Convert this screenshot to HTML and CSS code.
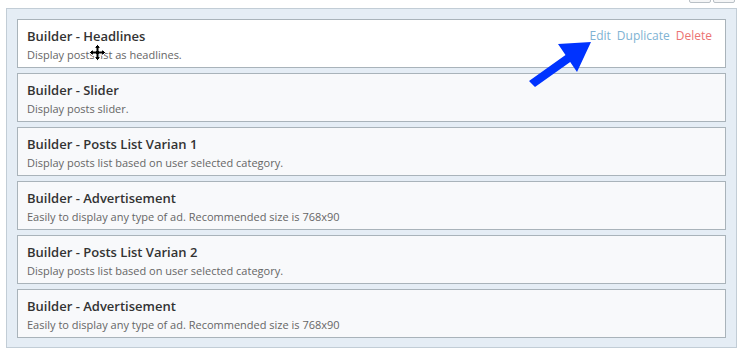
FILE: index.html
```html
<!DOCTYPE html>
<html>
<head>
<meta charset="utf-8">
<link rel="stylesheet" href="styles.css">
</head>
<body>
<div class="topbar">
  <span class="tbtn"></span><span class="tbtn"></span>
</div>
<div class="panel">
  <div class="card active">
    <div class="text">
      <div class="title">Builder - Headlines</div>
      <div class="desc">Display posts list as headlines.</div>
    </div>
    <div class="actions">
      <span class="edit">Edit</span>
      <span class="edit">Duplicate</span>
      <span class="del">Delete</span>
    </div>
    <svg class="cursor" width="17" height="17" viewBox="0 0 17 17">
      <path d="M8.5 0.5 L12 4 L10 4 L10 7 L13 7 L13 5 L16.5 8.5 L13 12 L13 10 L10 10 L10 13 L12 13 L8.5 16.5 L5 13 L7 13 L7 10 L4 10 L4 12 L0.5 8.5 L4 5 L4 7 L7 7 L7 4 L5 4 Z" fill="#000" stroke="#fff" stroke-width="1"/>
    </svg>
    <svg class="arrow" width="80" height="56" viewBox="0 0 80 56">
      <polygon points="71,4 57,34 50.2,24 15,49 9,43 45.5,17 38,6" fill="#0033ff"/>
    </svg>
  </div>
  <div class="card">
    <div class="text">
      <div class="title">Builder - Slider</div>
      <div class="desc">Display posts slider.</div>
    </div>
  </div>
  <div class="card">
    <div class="text">
      <div class="title">Builder - Posts List Varian 1</div>
      <div class="desc">Display posts list based on user selected category.</div>
    </div>
  </div>
  <div class="card">
    <div class="text">
      <div class="title">Builder - Advertisement</div>
      <div class="desc">Easily to display any type of ad. Recommended size is 768x90</div>
    </div>
  </div>
  <div class="card">
    <div class="text">
      <div class="title">Builder - Posts List Varian 2</div>
      <div class="desc">Display posts list based on user selected category.</div>
    </div>
  </div>
  <div class="card">
    <div class="text">
      <div class="title">Builder - Advertisement</div>
      <div class="desc">Easily to display any type of ad. Recommended size is 768x90</div>
    </div>
  </div>
</div>
</body>
</html>
```
FILE: styles.css
```css
html, body {
  margin: 0;
  padding: 0;
  background: #fff;
  font-family: "Open Sans", "Liberation Sans", sans-serif;
}
.topbar {
  height: 8px;
  width: 737px;
  overflow: hidden;
  display: flex;
  justify-content: flex-end;
  gap: 2px;
  box-sizing: border-box;
  padding-right: 2px;
}
.tbtn {
  display: block;
  width: 22px;
  height: 20px;
  margin-top: -17px;
  box-sizing: border-box;
  border: 1px solid #b9c0c6;
  border-radius: 2px;
  background: #f4f5f6;
}
.panel {
  margin-left: 6px;
  width: 731px;
  box-sizing: border-box;
  background: #e5edf5;
  border: 1px solid #c2cdd6;
  padding: 10px 10px 9px 10px;
  display: flex;
  flex-direction: column;
  gap: 5px;
}
.card {
  position: relative;
  height: 49px;
  box-sizing: border-box;
  border: 1px solid #a9b3ba;
  background: #f8f9fb;
  padding: 7px 13px 0 9px;
  display: flex;
  justify-content: space-between;
  align-items: flex-start;
}
.card.active {
  background: #fff;
}
.title {
  font-size: 13px;
  font-weight: 600;
  color: #333;
  line-height: 18px;
}
.desc {
  font-size: 11px;
  color: #666;
  line-height: 18px;
  margin-top: 1px;
}
.actions {
  display: flex;
  gap: 6px;
  font-size: 12px;
  line-height: 18px;
}
.edit { color: #80b3d3; }
.del { color: #ec7373; }
.cursor {
  position: absolute;
  left: 71px;
  top: 24px;
  z-index: 2;
}
.arrow {
  position: absolute;
  left: 502px;
  top: 18px;
  z-index: 2;
}
```
